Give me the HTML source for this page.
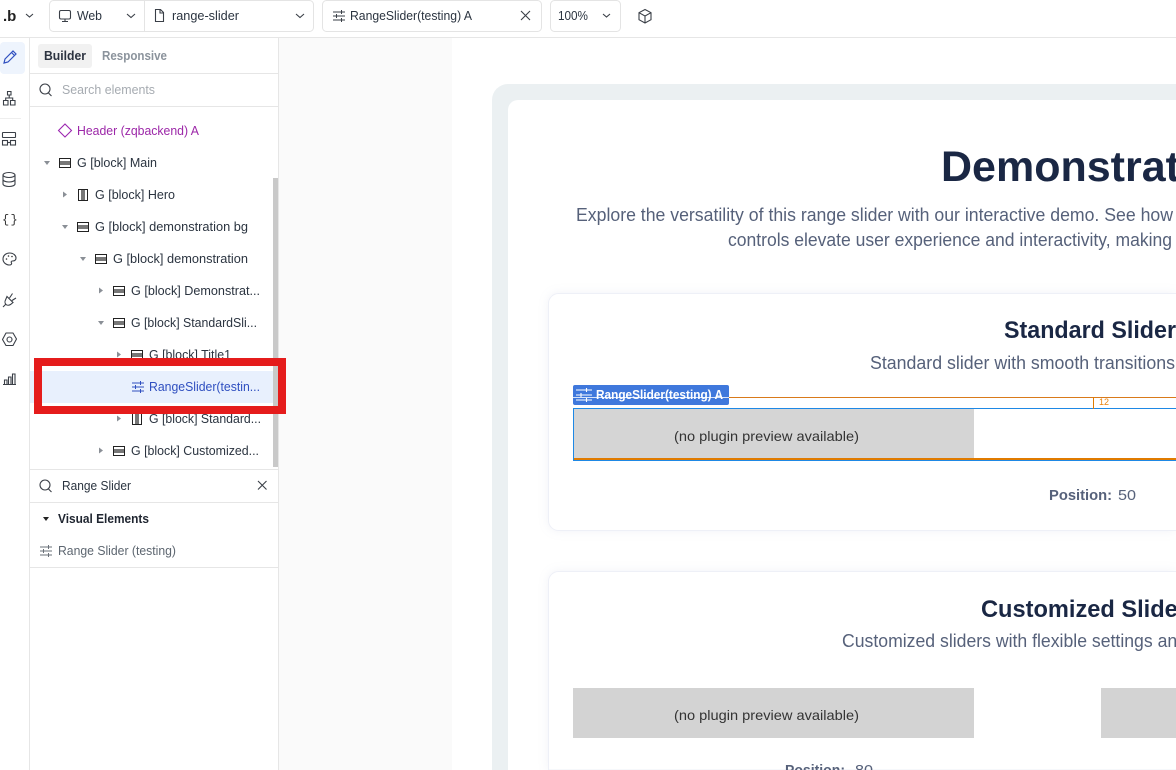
<!DOCTYPE html>
<html><head><meta charset="utf-8"><title>Builder</title>
<style>
html,body{margin:0;padding:0;background:#fff;width:1176px;height:770px;overflow:hidden}
svg{display:block;font-family:"Liberation Sans",sans-serif}
.t{font-size:12.5px;fill:#2b3440}
.ic{fill:none;stroke:#3a3f47;stroke-width:1.1}
.tri{fill:#8a8f96}
.card{fill:#fff;stroke:#eef0f7;filter:drop-shadow(0 0 5px rgba(100,110,170,.09))}
</style></head><body>
<svg width="1176" height="770" viewBox="0 0 1176 770" xmlns="http://www.w3.org/2000/svg">
<defs>
<g id="rows"><rect x="0.5" y="0.5" width="11" height="9" fill="none" stroke="#222" stroke-width="1"/><rect x="1" y="3" width="10" height="4" fill="#777"/></g>
<g id="cols"><rect x="0.5" y="0.5" width="9" height="11" fill="none" stroke="#222" stroke-width="1"/><rect x="3" y="1" width="4" height="10" fill="#777"/></g>
<g id="sl"><path d="M0 2.500H12M0 6.500H12M0 10.500H12M8.500 .5V4.500M3.500 4.500V8.500M8.500 8.500V12.500" fill="none" stroke-width="1"/></g>
</defs>
<!-- backgrounds -->
<rect x="279" y="38" width="173" height="732" fill="#fafafa"/>
<rect x="0" y="37" width="1176" height="1" fill="#e6e6e6"/>
<rect x="29" y="38" width="1" height="732" fill="#e6e6e6"/>
<rect x="278" y="38" width="1" height="732" fill="#e6e6e6"/>

<!-- top bar -->
<text x="3" y="21" font-size="15" font-weight="700" fill="#222">.b</text>
<path d="M26 14l3.500 3 3.500-3" class="ic" stroke-width="1"/>
<rect x="49.500" y="0.500" width="264" height="31" rx="4" fill="#fff" stroke="#e4e4e4"/>
<rect x="144" y="1" width="1" height="30" fill="#e4e4e4"/>
<rect x="59.500" y="10.500" width="11" height="8.500" rx="1.500" class="ic"/><path d="M62 21.500h6M65 19v2.500" class="ic"/>
<text class="t" x="77" y="20" textLength="25" lengthAdjust="spacingAndGlyphs">Web</text>
<path d="M127 14l4 3.500 4-3.500" class="ic"/>
<path d="M155.500 9.500h5l3 3v9h-8zM160 9.500v3.500h3.500" class="ic"/>
<text class="t" x="172" y="20" textLength="67" lengthAdjust="spacingAndGlyphs">range-slider</text>
<path d="M296 14l4 3.500 4-3.500" class="ic"/>
<rect x="322.500" y="0.500" width="219" height="31" rx="4" fill="#fff" stroke="#e4e4e4"/>
<use href="#sl" x="333" y="9.500" stroke="#3a3f47"/>
<text class="t" x="350" y="20" textLength="122" lengthAdjust="spacingAndGlyphs">RangeSlider(testing) A</text>
<path d="M521 11l9 9M530 11l-9 9" class="ic"/>
<rect x="550.500" y="0.500" width="70" height="31" rx="4" fill="#fff" stroke="#e4e4e4"/>
<text class="t" x="558" y="20" textLength="30" lengthAdjust="spacingAndGlyphs">100%</text>
<path d="M603 14l3.500 3 3.500-3" class="ic"/>
<path d="M645 9.500l6 3.200v7l-6 3.300-6-3.300v-7zM639 12.700l6 3.300 6-3.300M645 16v7" class="ic"/>

<!-- left rail -->
<rect x="0" y="42" width="25" height="32" rx="4" fill="#eef4fd"/>
<path d="M4 63l1-4 8-8 3 3-8 8zM11.500 52.500l3 3" fill="none" stroke="#2f4fc0" stroke-width="1.200"/>
<path d="M7.500 91.500h3.500v3.500h-3.500zM3.500 100.500h4.500v4.500h-4.500zM10.500 100.500h4.500v4.500h-4.500zM9.200 95v3M5.700 100.500v-2.500h7v2.500" class="ic"/>
<rect x="0" y="118" width="21" height="1" fill="#eee"/>
<rect x="2.500" y="132.500" width="13" height="5" rx=".5" class="ic"/><rect x="2.500" y="140.500" width="5" height="4.500" class="ic"/><rect x="10.500" y="140.500" width="5" height="4.500" class="ic"/><path d="M7.500 142.500h3" class="ic"/>
<ellipse cx="9" cy="175" rx="6" ry="2.500" class="ic"/><path d="M3 175v9c0 1.500 3 2.500 6 2.500s6-1 6-2.500v-9M3 179.500c0 1.500 3 2.500 6 2.500s6-1 6-2.500" class="ic"/>
<text x="2 10.500" y="223" font-size="12" fill="#333" font-family="Liberation Mono">{}</text>
<path d="M9.500 253c4 0 6.500 2.500 6.500 5 0 2.500-2 3-3.500 3-1.500 0-1.500 1-1 2 .4 1-.4 2-2 2-3.500 0-6.500-2.500-6.500-6s3-6 6.500-6z" class="ic"/><circle cx="6.500" cy="259" r=".8" fill="#333"/><circle cx="8.500" cy="256" r=".8" fill="#333"/><circle cx="12" cy="256.500" r=".8" fill="#333"/>
<path d="M3 307l3-3M7 296.500l6 6-2.500 2c-1.500 1-3.500 1-4.500 0-1.200-1.200-1.200-3.200-.5-4.500zM9.500 298l3-4.500M12 300.500l4-2.500" class="ic"/>
<path d="M6 333h7l3.500 6-3.500 6.500H6L2.500 339.500z" class="ic" stroke-linejoin="round"/><circle cx="9.500" cy="339.500" r="2.500" class="ic"/>
<path d="M3 384.500h13M4.500 384v-4h2.500v4M8.500 384v-7h2.500v7M12.500 384v-10h2.500v10" class="ic"/>

<!-- panel tabs -->
<rect x="38" y="44" width="54" height="24" rx="3" fill="#f1f1f1"/>
<text class="t" x="44" y="60" textLength="42" lengthAdjust="spacingAndGlyphs" font-weight="700" style="fill:#2c3340">Builder</text>
<text class="t" x="102" y="60" textLength="65" lengthAdjust="spacingAndGlyphs" font-weight="700" style="fill:#8b939c">Responsive</text>
<rect x="30" y="73" width="248" height="1" fill="#e6e6e6"/>
<circle cx="45" cy="89" r="5" class="ic"/><path d="M48.500 93l3 3" class="ic"/>
<text class="t" x="62" y="94" textLength="93" lengthAdjust="spacingAndGlyphs" style="fill:#a6abb1">Search elements</text>
<rect x="30" y="106" width="248" height="1" fill="#e6e6e6"/>

<!-- tree -->
<path d="M65 124l6.500 6.500-6.500 6.500-6.500-6.500z" fill="none" stroke="#9c27b0" stroke-width="1.100"/>
<text class="t" x="77" y="135" textLength="122" lengthAdjust="spacingAndGlyphs" style="fill:#9c27a8">Header (zqbackend) A</text>

<path class="tri" d="M44 161h6l-3 4z"/><use href="#rows" x="59" y="158"/>
<text class="t" x="77" y="167" textLength="80" lengthAdjust="spacingAndGlyphs">G [block] Main</text>

<path class="tri" d="M63 191.500l4 3-4 3z"/><use href="#cols" x="78" y="189"/>
<text class="t" x="95" y="199" textLength="80" lengthAdjust="spacingAndGlyphs">G [block] Hero</text>

<path class="tri" d="M62 225h6l-3 4z"/><use href="#rows" x="77" y="222"/>
<text class="t" x="95" y="231" textLength="153" lengthAdjust="spacingAndGlyphs">G [block] demonstration bg</text>

<path class="tri" d="M80 257h6l-3 4z"/><use href="#rows" x="95" y="254"/>
<text class="t" x="113" y="263" textLength="135" lengthAdjust="spacingAndGlyphs">G [block] demonstration</text>

<path class="tri" d="M99 287.500l4 3-4 3z"/><use href="#rows" x="113" y="286"/>
<text class="t" x="131" y="295" textLength="129" lengthAdjust="spacingAndGlyphs">G [block] Demonstrat...</text>

<path class="tri" d="M98 321h6l-3 4z"/><use href="#rows" x="113" y="318"/>
<text class="t" x="131" y="327" textLength="126" lengthAdjust="spacingAndGlyphs">G [block] StandardSli...</text>

<path class="tri" d="M117 351.500l4 3-4 3z"/><use href="#rows" x="131" y="350"/>
<text class="t" x="149" y="359" textLength="82" lengthAdjust="spacingAndGlyphs">G [block] Title1</text>

<rect x="30" y="371" width="248" height="32" fill="#e8f0fd"/>
<use href="#sl" x="132" y="380.500" stroke="#2f4fc0"/>
<text class="t" x="149" y="391" textLength="111" lengthAdjust="spacingAndGlyphs" style="fill:#2f4fc0">RangeSlider(testin...</text>

<path class="tri" d="M117 415.500l4 3-4 3z"/><use href="#cols" x="132" y="413"/>
<text class="t" x="149" y="423" textLength="112" lengthAdjust="spacingAndGlyphs">G [block] Standard...</text>

<path class="tri" d="M99 447.500l4 3-4 3z"/><use href="#rows" x="113" y="446"/>
<text class="t" x="131" y="455" textLength="128" lengthAdjust="spacingAndGlyphs">G [block] Customized...</text>

<!-- scrollbar -->
<rect x="273" y="178" width="5" height="289" fill="#c9c9c9"/>

<!-- red highlight -->
<rect x="38" y="362" width="244" height="48" fill="none" stroke="#e51c1c" stroke-width="8"/>

<!-- plugin search -->
<rect x="30" y="469" width="248" height="1" fill="#e6e6e6"/>
<circle cx="45" cy="485" r="5" class="ic"/><path d="M48.500 489l3 3" class="ic"/>
<text class="t" x="62" y="490" textLength="69" lengthAdjust="spacingAndGlyphs">Range Slider</text>
<path d="M258 481l8.500 8.500M266.500 481l-8.500 8.500" class="ic" stroke="#555"/>
<rect x="30" y="502" width="248" height="1" fill="#e6e6e6"/>
<path d="M43 517h6l-3 4z" fill="#222"/>
<text class="t" x="58" y="523" textLength="91" lengthAdjust="spacingAndGlyphs" font-weight="700" style="fill:#1f2530">Visual Elements</text>
<use href="#sl" x="40" y="544.500" stroke="#6a7078"/>
<text class="t" x="58" y="555" textLength="118" lengthAdjust="spacingAndGlyphs" style="fill:#5d6670">Range Slider (testing)</text>
<rect x="30" y="567" width="248" height="1" fill="#e6e6e6"/>

<!-- canvas -->
<path d="M492 770V100a16 16 0 0 1 16-16H1176V770Z" fill="#ebf0f2"/>
<path d="M508 770V110a10 10 0 0 1 10-10H1176V770Z" fill="#fff"/>
<text x="941" y="181" font-size="43" font-weight="700" fill="#1a2744">Demonstration</text>
<text x="576" y="221" font-size="18" fill="#56617a" textLength="597" lengthAdjust="spacingAndGlyphs">Explore the versatility of this range slider with our interactive demo. See how</text>
<text x="728" y="246" font-size="18" fill="#56617a" textLength="444" lengthAdjust="spacingAndGlyphs">controls elevate user experience and interactivity, making</text>

<!-- card 1 -->
<path class="card" d="M1176 293.500H558.500a10 10 0 0 0-10 10V520.500a10 10 0 0 0 10 10H1176"/>
<text x="1004" y="338" font-size="24" font-weight="700" fill="#1a2744" textLength="172" lengthAdjust="spacingAndGlyphs">Standard Slider</text>
<text x="870" y="369" font-size="18" fill="#56617a" textLength="305" lengthAdjust="spacingAndGlyphs">Standard slider with smooth transitions</text>
<rect x="574" y="409" width="400" height="50" fill="#d5d5d5"/>
<text x="674" y="441" font-size="14" fill="#333" textLength="185" lengthAdjust="spacingAndGlyphs">(no plugin preview available)</text>
<rect x="573" y="397" width="603" height="1" fill="#d97a1a"/>
<rect x="573" y="408" width="603" height="1" fill="#1e88e5"/>
<rect x="573" y="408" width="1" height="53" fill="#1e88e5"/>
<rect x="574" y="458" width="602" height="2" fill="#e07b00"/>
<rect x="573" y="460" width="603" height="1" fill="#1e88e5"/>
<rect x="1093" y="397" width="1" height="12" fill="#e07b00"/>
<text x="1099" y="405" font-size="9" fill="#e8820e">12</text>
<rect x="573" y="385" width="156" height="20" rx="2" fill="#3f78dc"/>
<path d="M576 390H592M576 395H592M576 400H592M586.500 388V392M581 393V397M586.500 398V402" fill="none" stroke="#fff" stroke-width="1.100"/>
<text x="596" y="399" font-size="12.500" font-weight="700" fill="#fff" textLength="127" lengthAdjust="spacingAndGlyphs">RangeSlider(testing) A</text>
<rect x="573" y="397" width="156" height="1" fill="#fff" opacity=".8"/>
<text x="1049" y="500" font-size="14.500" font-weight="700" fill="#56617a" textLength="63" lengthAdjust="spacingAndGlyphs">Position:</text>
<text x="1118" y="500" font-size="15" fill="#56617a" textLength="18" lengthAdjust="spacingAndGlyphs">50</text>

<!-- card 2 -->
<path class="card" d="M1176 571.500H558.500a10 10 0 0 0-10 10V770H1176"/>
<text x="981" y="617" font-size="24" font-weight="700" fill="#1a2744" textLength="206" lengthAdjust="spacingAndGlyphs">Customized Slider</text>
<text x="842" y="647" font-size="18" fill="#56617a" textLength="345" lengthAdjust="spacingAndGlyphs">Customized sliders with flexible settings and</text>
<rect x="573" y="688" width="401" height="50" fill="#d3d3d3"/>
<text x="674" y="720" font-size="14" fill="#333" textLength="185" lengthAdjust="spacingAndGlyphs">(no plugin preview available)</text>
<rect x="1101" y="688" width="75" height="50" fill="#d3d3d3"/>
<text x="785" y="775" font-size="14.500" font-weight="700" fill="#56617a" textLength="60" lengthAdjust="spacingAndGlyphs">Position:</text>
<text x="855" y="775" font-size="15" fill="#56617a" textLength="18" lengthAdjust="spacingAndGlyphs">80</text>
</svg>
</body></html>
